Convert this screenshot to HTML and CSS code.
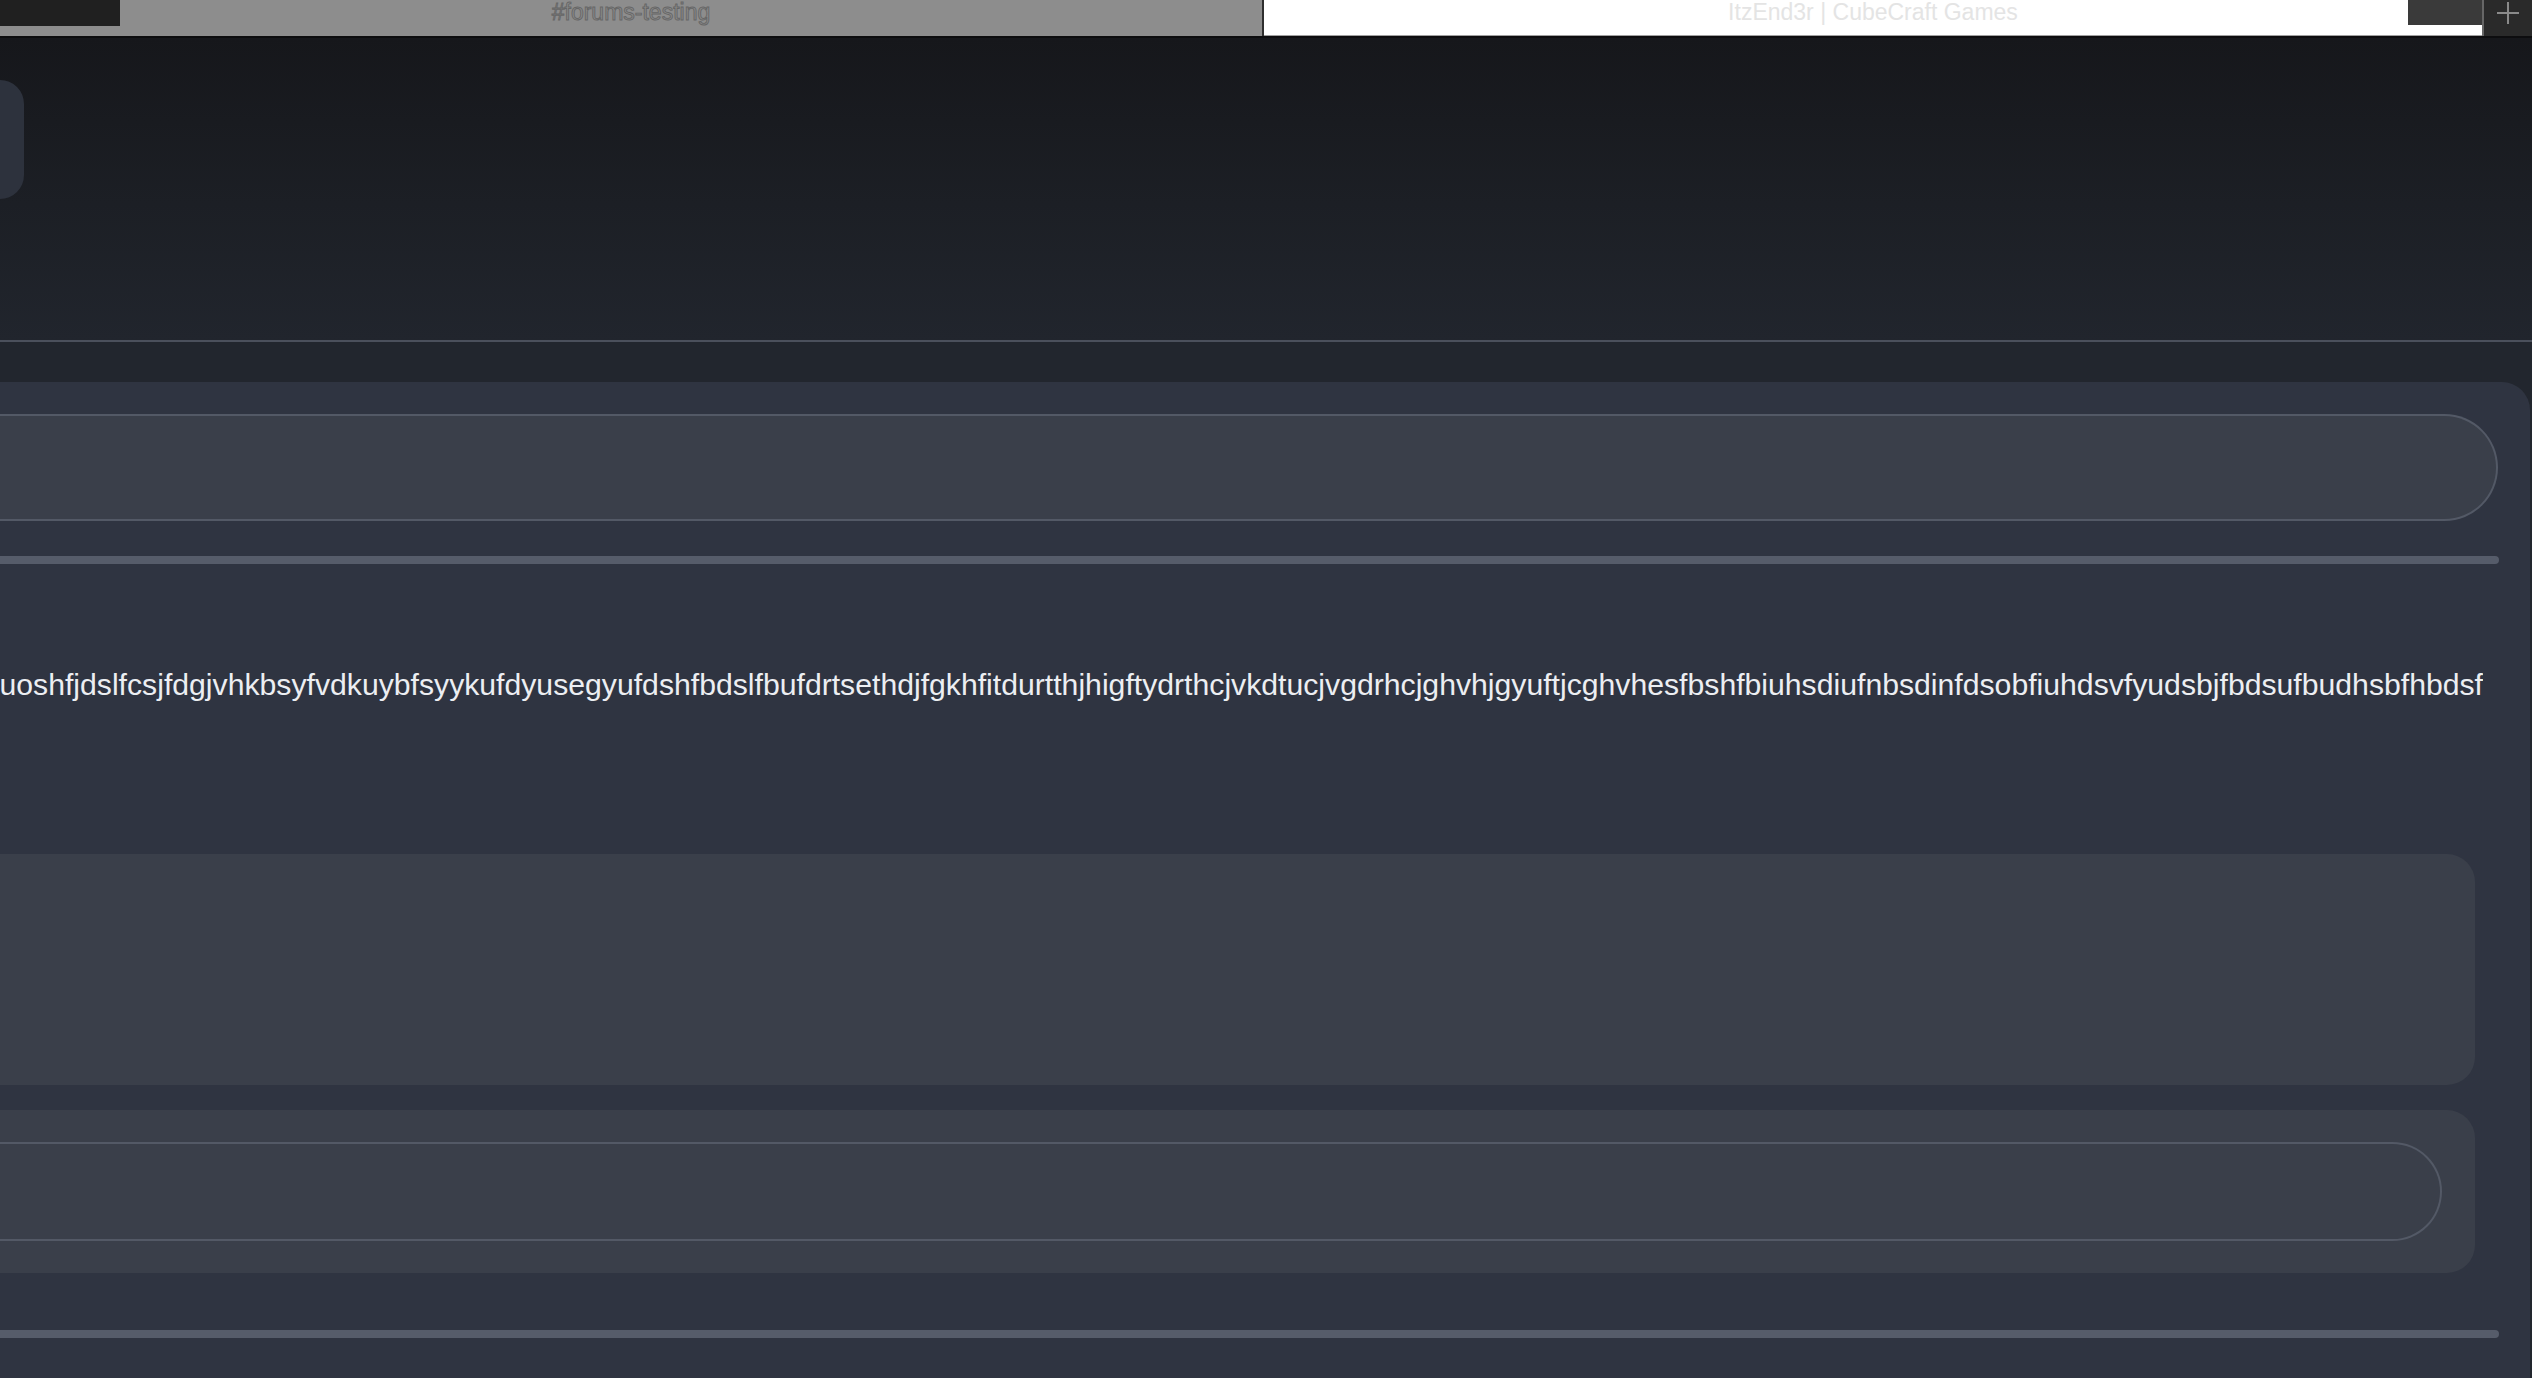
FILE: index.html
```html
<!DOCTYPE html>
<html lang="en">
<head>
<meta charset="utf-8">
<title>ItzEnd3r | CubeCraft Games</title>
<link rel="stylesheet" href="styles.css">
</head>
<body>
  <div class="tabbar">
    <div class="tab tab-inactive">
      <span class="tab-block tab-block-left"></span>
      <span class="tab-title">#forums-testing</span>
    </div>
    <div class="tab-sep"></div>
    <div class="tab tab-active">
      <span class="tab-title">ItzEnd3r | CubeCraft Games</span>
      <span class="tab-block tab-block-right"></span>
    </div>
    <div class="tab-divider"></div>
    <div class="tab-new">
      <svg class="plus" width="22" height="22" viewBox="0 0 22 22" aria-hidden="true">
        <line x1="11" y1="0" x2="11" y2="22"/>
        <line x1="0" y1="11" x2="22" y2="11"/>
      </svg>
    </div>
  </div>

  <header class="header">
    <div class="side-card"></div>
  </header>

  <main class="main">
    <section class="card">
      <div class="pill pill-top"></div>
      <div class="bar bar-top"></div>
      <div class="message">
        <p class="message-text">uoshfjdslfcsjfdgjvhkbsyfvdkuybfsyykufdyusegyufdshfbdslfbufdrtsethdjfgkhfitdurtthjhigftydrthcjvkdtucjvgdrhcjghvhjgyuftjcghvhesfbshfbiuhsdiufnbsdinfdsobfiuhdsvfyudsbjfbdsufbudhsbfhbdsf</p>
      </div>
      <div class="box box-large"></div>
      <div class="box box-reply">
        <div class="pill pill-reply"></div>
      </div>
      <div class="bar bar-bottom"></div>
    </section>
  </main>
</body>
</html>
```

FILE: styles.css
```css
* {
  box-sizing: border-box;
}

html, body {
  margin: 0;
  padding: 0;
}

body {
  width: 2532px;
  height: 1378px;
  overflow: hidden;
  background: #292d35;
  font-family: "Liberation Sans", Arial, sans-serif;
}

/* ---------- tab bar ---------- */
.tabbar {
  display: flex;
  height: 38px;
  border-bottom: 2px solid #0d0d0f;
  background: #2a2a2a;
}

.tab {
  position: relative;
  height: 36px;
  display: flex;
  justify-content: center;
  align-items: flex-start;
  overflow: hidden;
}

.tab-title {
  font-size: 23px;
  line-height: 25px;
  white-space: nowrap;
}

.tab-inactive {
  width: 1262px;
  background: #8d8d8d;
}

.tab-inactive .tab-title {
  color: #8a8a8a;
  -webkit-text-stroke: 0.9px #666666;
}

.tab-sep {
  width: 2px;
  height: 36px;
  background: #2e2e2e;
}

.tab-active {
  width: 1218px;
  background: #ffffff;
  box-shadow: inset 0 -1px 0 #a0a0a0;
}

.tab-active .tab-title {
  color: #e4e4e4;
}

.tab-block {
  position: absolute;
  top: 0;
  height: 25px;
}

.tab-block-left {
  left: 0;
  width: 120px;
  height: 26px;
  background: #202020;
}

.tab-block-right {
  right: 0;
  width: 74px;
  background: #3a3a3a;
}

.tab-divider {
  width: 2px;
  height: 36px;
  background: #666666;
}

.tab-new {
  flex: 1;
  height: 36px;
  display: flex;
  justify-content: center;
  align-items: flex-start;
  padding-top: 2px;
  background: #2a2a2a;
}

.plus line {
  stroke: #8a8a8a;
  stroke-width: 2;
}

/* ---------- header ---------- */
.header {
  height: 304px;
  padding-top: 42px;
  background: linear-gradient(180deg, #16171b 0%, #1c1f25 55%, #21252d 100%);
  border-bottom: 2px solid #4b505c;
}

.side-card {
  width: 24px;
  height: 119px;
  background: #2d323d;
  border-radius: 0 24px 24px 0;
}

/* ---------- main ---------- */
.main {
  height: 1036px;
  padding-top: 40px;
  background: #22262e;
}

.card {
  width: 2530px;
  height: 996px;
  padding-top: 32px;
  background: #2f3441;
  border-radius: 0 28px 0 0;
  display: flex;
  flex-direction: column;
}

.pill {
  background: #3a3f4a;
  border: 2px solid #535966;
  border-left: none;
}

.pill-top {
  width: 2498px;
  height: 107px;
  border-radius: 0 54px 54px 0;
}

.bar {
  height: 8px;
  width: 2499px;
  background: #565c6a;
  border-radius: 0 4px 4px 0;
}

.bar-top {
  margin-top: 35px;
}

.message {
  margin-top: 103px;
  width: 2483px;
  display: flex;
  justify-content: flex-end;
  overflow: hidden;
}

.message-text {
  margin: 0;
  flex-shrink: 0;
  white-space: nowrap;
  font-size: 30.2px;
  line-height: 36px;
  color: #eceef2;
}

.box {
  width: 2475px;
  background: #3a3f4a;
  border-radius: 0 28px 28px 0;
}

.box-large {
  margin-top: 151px;
  height: 231px;
}

.box-reply {
  margin-top: 25px;
  height: 163px;
  padding: 32px 33px 0 0;
}

.pill-reply {
  height: 99px;
  border-radius: 0 50px 50px 0;
}

.bar-bottom {
  margin-top: 57px;
}
```
